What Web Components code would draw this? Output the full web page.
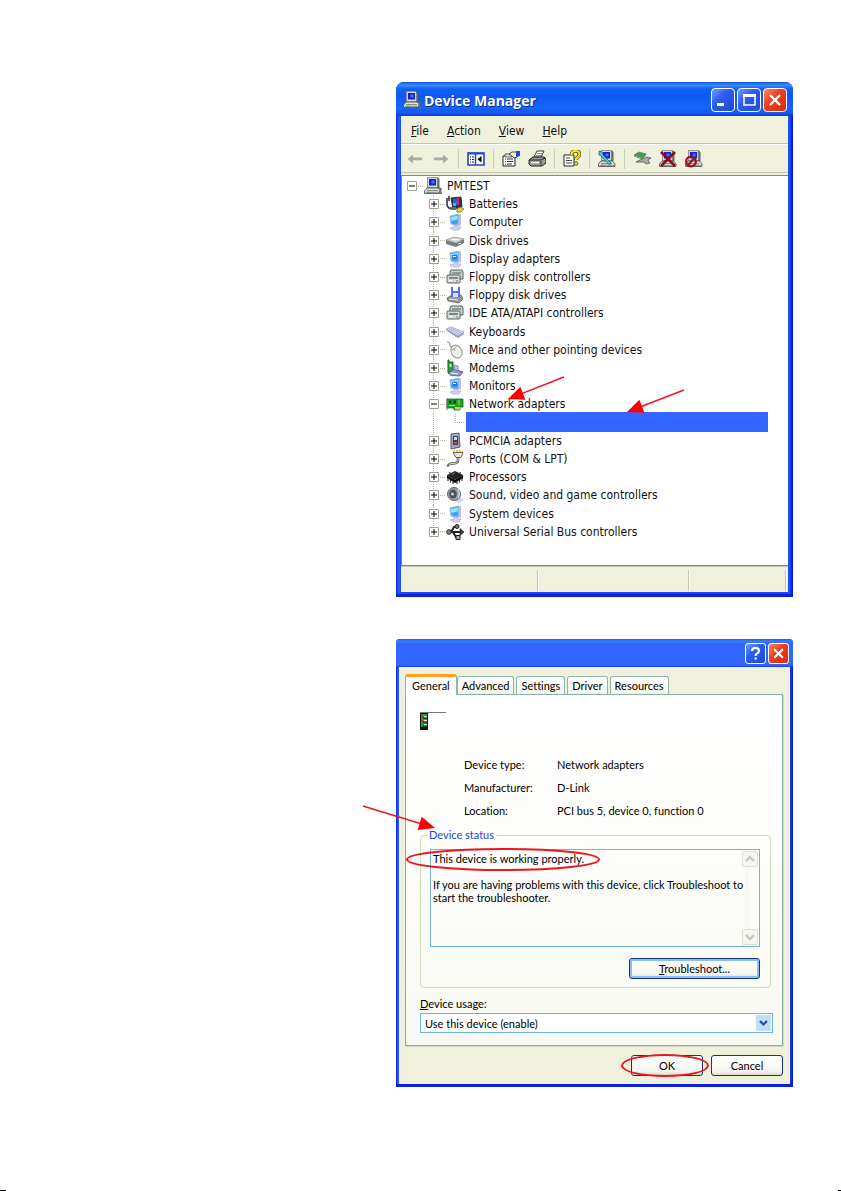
<!DOCTYPE html>
<html lang="en">
<head>
<meta charset="utf-8">
<title>Device Manager</title>
<style>
  * { box-sizing: border-box; }

  body {
    margin: 0;
    background: #fff;
    color: #000;
    font: 12px/16px "DejaVu Sans Condensed", "DejaVu Sans", sans-serif;
    --face: #eff1dc;
  }

  main {
    min-height: 100vh;
    display: grid;
    grid-template-columns: 396px minmax(0, 1fr);
    grid-template-rows: auto auto 1fr;
    row-gap: 42px;
    padding: 82px 48px 0 0;
    position: relative;
  }

  figure { margin: 0; grid-column: 2; position: relative; }

  .crop {
    position: absolute;
    bottom: 0;
    height: 1px;
    background: #000;
  }
  .crop.left { left: 0; width: 6px; }
  .crop.right { right: 0; width: 3px; }
</style>
</head>
<body>
<main>
  <figure>
    <xp-window heading="Device Manager" icon="pc" controls="minimize maximize close">
      <xp-menu></xp-menu>
      <xp-toolbar></xp-toolbar>
      <device-tree>
        <tree-item kind="root" icon="pc" open>PMTEST</tree-item>
        <tree-item icon="battery">Batteries</tree-item>
        <tree-item icon="computer">Computer</tree-item>
        <tree-item icon="disk">Disk drives</tree-item>
        <tree-item icon="display">Display adapters</tree-item>
        <tree-item icon="controller">Floppy disk controllers</tree-item>
        <tree-item icon="floppy">Floppy disk drives</tree-item>
        <tree-item icon="controller">IDE ATA/ATAPI controllers</tree-item>
        <tree-item icon="keyboard">Keyboards</tree-item>
        <tree-item icon="mouse">Mice and other pointing devices</tree-item>
        <tree-item icon="modem">Modems</tree-item>
        <tree-item icon="display">Monitors</tree-item>
        <tree-item icon="network" open>Network adapters</tree-item>
        <tree-item kind="selected"></tree-item>
        <tree-item icon="pcmcia">PCMCIA adapters</tree-item>
        <tree-item icon="port">Ports (COM &amp; LPT)</tree-item>
        <tree-item icon="cpu">Processors</tree-item>
        <tree-item icon="sound">Sound, video and game controllers</tree-item>
        <tree-item icon="computer">System devices</tree-item>
        <tree-item icon="usb" kind="last">Universal Serial Bus controllers</tree-item>
      </device-tree>
      <status-bar></status-bar>
    </xp-window>
    <call-out shape="arrow" from="168,295" to="112,317"></call-out>
    <call-out shape="arrow" from="288,308" to="231,330"></call-out>
  </figure>

  <figure>
    <xp-window compact controls="help close">
      <adapter-properties></adapter-properties>
    </xp-window>
    <call-out shape="arrow" from="-33,167" to="39,189"></call-out>
    <call-out shape="ellipse" from="11,210" to="203,231"></call-out>
  </figure>

  <span class="crop left"></span>
  <span class="crop right"></span>
</main>

<script>
const PC = `
  <path d="M3.500.5H13L15 2v9H3.500z" fill="#7f8582" stroke="#444" stroke-width=".8"/>
  <path d="M3.500.5H13v10H3.500z" fill="#d5d8d0"/>
  <path d="M5 2h7v6.500H5z" fill="#1420d8"/><path d="M7.500 3.500h3v3h-3z" fill="#3a76ff"/>
  <path d="M.5 14L3 11h11.500l2.500 3v2.500H.5z" fill="#e1e1d8" stroke="#555" stroke-width=".9"/>
  <path d="M3 13.500h11M2 15.300h14" stroke="#8a8c85"/><path d="M3 15.300h3" stroke="#2fae4b"/>`;

const LCD = `
  <path d="M12 2l3-1v11l-3 1z" fill="#b8bfe8"/>
  <path d="M4 3l9-2-1 11-7-1z" fill="#39a5f0" stroke="#9fb3e6"/>
  <path d="M5 4l7-1.500-.4 4L5.300 8z" fill="#8ee6ff"/>
  <path d="M8 12h3l.5 2H15l-2 3H7l-3-2 4-1z" fill="#ccd2f2" stroke="#98a0cf" stroke-width=".6"/>`;

const ICONS = {
  pc: PC + `<path d="M14 11q4 0 2.500 2t0 3l1 1" fill="none" stroke="#667" stroke-width="1.500"/>`,
  battery: `
    <path d="M1 3v7q1 4 6 4M3 1v5" fill="none" stroke="#334" stroke-width="1.600"/>
    <path d="M5 3l10-1 1 10-9 2z" fill="#26305e" stroke="#333"/>
    <path d="M7 4h4v6H7z" fill="#3558e8"/><path d="M11 3h2v7h-2z" fill="#e02d35"/><path d="M7 8h3v3H7z" fill="#2bc6cf"/>
    <path d="M4 12h6v3H5z" fill="#667"/><path d="M11 14l3-2 4 2-3 3h-4z" fill="#e5d63b" stroke="#80751b" stroke-width=".8"/>`,
  computer: LCD,
  display: LCD + `<path d="M6 5l5-.6v4L6.500 9z" fill="#2275de"/><path d="M7 6.500h3" stroke="#fff"/>`,
  disk: `
    <path d="M0 8l8-3 10 2v4l-8 4-10-3z" fill="#777c7d"/>
    <path d="M0 8l8-3 10 2-8 4z" fill="#d8dbdb" stroke="#979c9c" stroke-width=".7"/>
    <ellipse cx="9" cy="7.600" rx="4" ry="1.400" fill="#fff" stroke="#aaa" stroke-width=".5"/>
    <path d="M12 12l3-1" stroke="#fff"/>`,
  controller: `
    <path d="M5 2h11l1 2v7H4V4z" fill="#c9cfcb" stroke="#586260"/><path d="M6 5h9" stroke="#586260"/>
    <rect x="1" y="7" width="13" height="8" rx="1" fill="#d8dcd8" stroke="#586260"/>
    <path d="M3 10h9" stroke="#333"/><path d="M3 12.500h3" stroke="#fff"/><path d="M10 13h2" stroke="#2a9d42"/>`,
  floppy: `
    <path d="M1 12l5-3h9l2 4-4 4-11-2z" fill="#92969e" stroke="#555" stroke-width=".7"/>
    <path d="M5 1h9v10H5z" fill="#5a6fe0"/><path d="M7 1h5v4H7z" fill="#fff"/><path d="M7 7h5v4H7z" fill="#dfe4ff"/>
    <path d="M3 13l9 1" stroke="#eee"/>`,
  keyboard: `
    <path d="M0 6l5-2 13 5v2l-6 4L1 8z" fill="#8f98bb"/>
    <path d="M0 6l5-2 13 5-6 4z" fill="#d4daf2" stroke="#9aa3c8" stroke-width=".7"/>
    <path d="M3 6l10 5M5 5.400l10 4.300" stroke="#8790bd" stroke-dasharray="1 1"/>`,
  mouse: `
    <path d="M1 1q3 0 3 3t3 2" fill="none" stroke="#9a9a92" stroke-width="1.200"/>
    <ellipse cx="10.500" cy="10.500" rx="5.200" ry="6.800" transform="rotate(-28 10.500 10.500)" fill="#f1f0e9" stroke="#96968e"/>
    <path d="M4.500 9q4 1 6-4M7.500 7l1 3" fill="none" stroke="#aaa9a0" stroke-width=".9"/>`,
  modem: `
    <path d="M2 1h1v2h4v11H2z" fill="#2e9d35" stroke="#1b5c22"/><path d="M3.500 5h2v3h-2z" fill="#c1f0b8"/>
    <path d="M2 14l6-4 9 3-3 4-9-.5z" fill="#8c95c9" stroke="#444a75" stroke-width=".7"/>
    <path d="M8 10V6l4 1v4" fill="#bac3ef" stroke="#666fa8" stroke-width=".7"/><path d="M5 14l7 1" stroke="#fff"/>`,
  network: `
    <path d="M1 4h16v8h-3v3H8v-2H1z" fill="#19a12b" stroke="#0c6a20" stroke-width=".8"/>
    <path d="M3 5.500h2.500v3H3zM7.500 5.500H10v3H7.500z" fill="#063b10"/><path d="M13 5v5M3 10.500h6" stroke="#c7dc3c"/>
    <path d="M9 12h5v2.500H9z" fill="#e4c93a"/><path d="M1 3v12" stroke="#777"/>`,
  pcmcia: `
    <path d="M5 2l8-1 1 14-9 2z" fill="#a3a9bd" stroke="#555b70"/>
    <path d="M7 4h5v9H7z" fill="#39425f"/><path d="M8 5h3v3H8z" fill="#ccd4ef"/><path d="M8 10h3v2H8z" fill="#d2463f"/>`,
  port: `
    <path d="M7 1h10" stroke="#e2d536" stroke-width="2" stroke-dasharray="2 1"/>
    <path d="M7 2.500h10l-2 5h-5z" fill="#e9e8d8" stroke="#66665d"/>
    <path d="M12 7.500v3q0 3-5 3t-5 3" fill="none" stroke="#555" stroke-width="2.600"/>
    <path d="M12 8v2.500q0 3-5 3t-4 2" fill="none" stroke="#ddd"/>`,
  cpu: `
    <path d="M1 7l8-4 8 4-8 5z" fill="#222"/><path d="M1 7v3l8 5 8-5V7l-8 5z" fill="#000"/>
    <path d="M2 10v3M4.500 12v2.500M7 13.500V16M11 13.500V16M13.500 12v2.500M16 10v3M3 4.500l2 1M15 4.500l-2 1" stroke="#333" stroke-width="1.200"/>
    <path d="M6 6.500l3-1.500" stroke="#888"/>`,
  sound: `
    <path d="M12 9l6 5-5 3-5-3z" fill="#cdd4fa"/>
    <circle cx="8" cy="8" r="6.500" fill="#9da3a8" stroke="#666"/>
    <ellipse cx="7" cy="8" rx="3.800" ry="4.500" fill="#4c5258"/><circle cx="6.500" cy="8" r="1.600" fill="#c9cfd3"/>
    <path d="M12 3q3 4 0 9" fill="none" stroke="#e9ecee"/>`,
  usb: `
    <path d="M1 9h14M5 9l3-5h3M7 9l3 5h2" fill="none" stroke="#222" stroke-width="2"/>
    <path d="M14 5.500L18 9l-4 3.500z" fill="#444" stroke="#111" stroke-width=".6"/>
    <circle cx="3" cy="9" r="2.300" fill="#888" stroke="#222"/><circle cx="11" cy="3.500" r="2" fill="#777" stroke="#222"/>
    <path d="M10 12.500h4v4h-4z" fill="#aaa" stroke="#222"/>`,

  back: `<path d="M1.500 9L7 4.500V7.500h9v3H7v3z" fill="#a9aca0"/><path d="M7 11h9" stroke="#fff" stroke-width=".6"/>`,
  forward: `<path d="M16.500 9L11 4.500V7.500H2v3h9v3z" fill="#a9aca0"/><path d="M2 11h9" stroke="#fff" stroke-width=".6"/>`,
  pane: `
    <path d="M1 3h16v12H1z" fill="#fff" stroke="#2a42bf" stroke-width="1.600"/><path d="M1 3.500h16" stroke="#2448e0" stroke-width="2"/>
    <path d="M8.500 4v11" stroke="#2a42bf" stroke-width="1.500"/>
    <path d="M3 7h1m1 0h2M3 9.500h1m1 0h2M3 12h1m1 0h2" stroke="#222"/><path d="M14.500 6v6.500L10.500 9.300z" fill="#000"/>`,
  properties: `
    <path d="M1 6h12v10H1z" fill="#fff" stroke="#222"/><path d="M3 4h7v3H3z" fill="#ddd" stroke="#444" stroke-width=".8"/>
    <path d="M3 9h1m1 0h6M3 11.500h1m1 0h6M3 14h1m1 0h5" stroke="#333"/>
    <path d="M7 4l3-2h5v5l-3 1-2-2z" fill="#f6eed7" stroke="#222" stroke-width=".8"/><path d="M14 1h4v5l-4 1z" fill="#2349c4"/>`,
  printer: `
    <path d="M6 7l3-6h7l-3 6z" fill="#fff" stroke="#333"/><path d="M9 3.500h5M8 5.500h5" stroke="#777" stroke-width=".8"/>
    <path d="M1 10l4-3h11l2 2v4l-4 3H3l-2-2z" fill="#999d96" stroke="#222"/>
    <path d="M1 10h12l4-2" fill="none" stroke="#222"/><path d="M3 12.500h8" stroke="#fff" stroke-width="1.400"/><path d="M13 11v5" stroke="#333"/>`,
  help: `
    <path d="M1 5h10v11H1z" fill="#fff" stroke="#222"/><path d="M3 8h4M3 10.500h6M3 13h6" stroke="#444"/>
    <path d="M8.500 5q0-4 4-4t4 3.500q0 2-3.500 4V10" fill="none" stroke="#4a4405" stroke-width="3.600"/>
    <path d="M8.500 5q0-4 4-4t4 3.500q0 2-3.500 4V10" fill="none" stroke="#f2e326" stroke-width="2.200"/>
    <circle cx="13" cy="13.500" r="1.800" fill="#f2e326" stroke="#4a4405" stroke-width=".8"/>`,
  scan: PC + `<path d="M1 1l3 1 1 3 8 8-1.500 2L3 6 1 5z" fill="#4cc9d9" stroke="#176775" stroke-width=".8"/>`,
  update: `
    <path d="M1 5l5-3 7 2-4 4z" fill="#41a43c" stroke="#666" stroke-width=".7"/>
    <path d="M1 6l8 3 4-4" fill="none" stroke="#888"/>
    <path d="M7 10l7-3 4 1-3 2 2 3-4 1-2-2H3l4-2z" fill="#a9aca9" stroke="#555" stroke-width=".8"/>`,
  uninstall: PC + `<path d="M2 2l14 14M16 2L2 16" stroke="#8d0e12" stroke-width="2.600"/>`,
  disable: PC + `<circle cx="6" cy="11.500" r="4.800" fill="none" stroke="#9b1015" stroke-width="2.200"/><path d="M3 15l6.500-7" stroke="#9b1015" stroke-width="2"/>`
};

const icon = (name, size = 18) =>
  `<svg width="${size}" height="${size}" viewBox="0 0 18 18" aria-hidden="true">${ICONS[name] || ""}</svg>`;

const CONTROLS = {
  minimize: `<path d="M5 14h7v3H5z" fill="#fff"/>`,
  maximize: `<path d="M6 6h11v10H6z" fill="none" stroke="#fff" stroke-width="1.500"/><path d="M5 6.500h13" stroke="#fff" stroke-width="3"/>`,
  close: `<path d="M6 6l10 10M16 6L6 16" stroke="#fff" stroke-width="2.400"/>`,
  help: `<path d="M7 8q0-3.500 4-3.500T15 8q0 1.800-2 2.800t-2 3" fill="none" stroke="#fff" stroke-width="2.400"/><path d="M10 15.500h2.400V18H10z" fill="#fff"/>`
};

class BaseElement extends HTMLElement {
  constructor() {
    super();
    this.attachShadow({ mode: "open" });
  }

  connectedCallback() {
    this.shadowRoot.innerHTML = this.render();
  }
}

class XpWindow extends BaseElement {
  render() {
    const heading = this.getAttribute("heading");
    const controls = this.getAttribute("controls").split(" ");
    return `
      <style>
        * { box-sizing: border-box; }
        :host {
          display: block;
          padding: 0 5px 5px;
          border-radius: 8px 8px 0 0;
          background: linear-gradient(90deg, #0d28e0, #2f62ff 3px, #1747f0 5px, #1747f0 calc(100% - 5px), #2454ff calc(100% - 4px), #0010d0);
          box-shadow: inset 0 -3px #0a1ee6;
        }
        header {
          height: 34px;
          margin: 0 -5px;
          padding: 1px 6px 0 7px;
          display: flex;
          align-items: center;
          gap: 2px;
          border-radius: 8px 8px 0 0;
          background: linear-gradient(#0a4fd8, #3a8dff 3px, #1160f0 7px, #1058f0 14px, #1565ff 26px, #1458f0 31px, #0a3cc8);
        }
        h1 {
          flex: 1;
          margin: 2px 0 0 1px;
          color: #fff;
          font: bold 14px/20px "Open Sans", sans-serif;
          text-shadow: 1px 1px #0a2a90;
        }
        button {
          width: 24px;
          height: 24px;
          padding: 0;
          border: 1px solid #fff;
          border-radius: 4px;
          background: linear-gradient(135deg, #6f9bff, #2b5df0 40%, #1d49d6);
        }
        button.close { background: linear-gradient(135deg, #ff8a6a, #f04023 40%, #d82a0c); }
        button svg { display: block; width: 100%; height: 100%; }
        .body { background: var(--face); }
        :host([compact]) { padding: 0 3px 3px; border-radius: 4px 4px 0 0; }
        :host([compact]) header {
          height: 28px;
          margin: 0 -3px;
          padding: 1px 4px 0 8px;
          border-radius: 4px 4px 0 0;
          background: linear-gradient(#1a5ce0, #2f7fff 2px, #3366ff 5px, #3366ff 26px, #1440e0);
        }
        :host([compact]) button { width: 21px; height: 21px; border-radius: 3px; }
      </style>
      <header>
        ${heading ? icon(this.getAttribute("icon")) : ""}
        <h1>${heading || ""}</h1>
        ${controls.map(name => `
          <button type="button" class="${name}" aria-label="${name}">
            <svg viewBox="0 0 22 22">${CONTROLS[name]}</svg>
          </button>`).join("")}
      </header>
      <div class="body"><slot></slot></div>
    `;
  }
}

class XpMenu extends BaseElement {
  render() {
    return `
      <style>
        :host {
          display: flex;
          gap: 18px;
          height: 28px;
          box-sizing: border-box;
          padding: 2px 10px 0;
          border-bottom: 1px solid #c3c6b4;
        }
        button { padding: 0; border: 0; background: none; font: inherit; color: #111; }
      </style>
      ${["File", "Action", "View", "Help"].map(item =>
        `<button type="button"><u>${item[0]}</u>${item.slice(1)}</button>`).join("")}
    `;
  }
}

class XpToolbar extends BaseElement {
  render() {
    const tools = ["back", "forward", "", "pane", "", "properties", "printer", "", "help",
      "", "scan", "", "update", "uninstall", "disable"];
    return `
      <style>
        :host {
          display: flex;
          align-items: center;
          gap: 8px;
          height: 29px;
          box-sizing: border-box;
          padding: 0 5px;
          border-top: 1px solid #fff;
          border-bottom: 1px solid #c3c6b4;
        }
        button { padding: 0; border: 0; background: none; }
        svg { display: block; }
        i { width: 1px; height: 20px; background: #cbcdbb; }
      </style>
      ${tools.map(name => name
        ? `<button type="button" aria-label="${name}">${icon(name)}</button>`
        : `<i></i>`).join("")}
    `;
  }
}

class DeviceTree extends BaseElement {
  render() {
    return `
      <style>
        :host {
          display: block;
          margin-top: 2px;
          padding: 1px 20px 24px 0;
          background: #fff;
          border: 1px solid #858b7c;
          border-width: 1px 0 1px 1px;
        }
        .list { display: grid; grid-auto-rows: 1fr; min-height: 364px; }
      </style>
      <div class="list" role="tree"><slot></slot></div>
    `;
  }
}

class TreeItem extends BaseElement {
  render() {
    const kind = this.getAttribute("kind") || "";
    if (kind === "selected") {
      return this.styles() + `
        <span class="guide"></span>
        <span class="elbow"></span>
        <span class="bar"></span>
      `;
    }
    const open = this.hasAttribute("open");
    return this.styles() + `
      <span class="guide ${kind}">
        <button type="button" aria-label="${open ? "Collapse" : "Expand"}">
          <svg width="10" height="10" viewBox="0 0 10 10">
            <path d="M.5.5h9v9h-9z" fill="#fff" stroke="#a0a391"/>
            <path d="M2 5h6${open ? "" : "M5 2v6"}" stroke="#000"/>
          </svg>
        </button>
      </span>
      ${icon(this.getAttribute("icon"))}
      <span class="text"><slot></slot></span>
    `;
  }

  styles() {
    return `
      <style>
        :host {
          display: flex;
          align-items: center;
          min-height: 18px;
          padding-left: 22px;
          color: #111;
          white-space: nowrap;
        }
        :host([kind="root"]) { padding-left: 0; }
        .guide {
          align-self: stretch;
          width: 22px;
          display: flex;
          align-items: center;
          padding-left: 5px;
          margin-right: -5px;
          background:
            repeating-linear-gradient(#b5b7a6 0 1px, transparent 1px 2px) 9px 0 / 1px 100% no-repeat,
            repeating-linear-gradient(90deg, #b5b7a6 0 1px, transparent 1px 2px) 14px 50% / 8px 1px no-repeat;
        }
        .guide.root { background-size: 0 0, 8px 1px; }
        .guide.last { background-size: 1px 50%, 8px 1px; }
        :host([kind="selected"]) .guide { background-size: 1px 100%, 0 0; }
        button { display: block; padding: 0; border: 0; background: none; }
        svg { display: block; flex: none; }
        .text { margin-left: 5px; }
        .elbow {
          align-self: stretch;
          width: 10px;
          margin: 0 1px 0 9px;
          background:
            repeating-linear-gradient(#b5b7a6 0 1px, transparent 1px 2px) 0 0 / 1px 50% no-repeat,
            repeating-linear-gradient(90deg, #b5b7a6 0 1px, transparent 1px 2px) 0 50% / 10px 1px no-repeat;
        }
        .bar { flex: 1; height: 20px; margin: -2px 0 0; background: #3366ff; }
        :host([kind="selected"]) { height: 18px; }
      </style>
    `;
  }
}

class StatusBar extends BaseElement {
  render() {
    return `
      <style>
        :host {
          display: flex;
          height: 26px;
          box-sizing: border-box;
          padding: 3px 2px 1px 0;
          border-top: 1px solid #c3c6b4;
        }
        span { border-right: 1px solid #c3c6b4; box-shadow: 1px 0 #fff; }
        span:nth-of-type(1) { flex: 137; }
        span:nth-of-type(2) { flex: 151; }
        span:nth-of-type(3) { flex: 97; }
      </style>
      <span></span><span></span><span></span>
    `;
  }
}

class XpButton extends BaseElement {
  render() {
    return `
      <style>
        :host { display: block; position: relative; width: 72px; }
        :host([wide]) { width: 131px; }
        button {
          display: block;
          width: 100%;
          height: 21px;
          padding: 0;
          border: 1px solid #12357c;
          border-radius: 3px;
          background: linear-gradient(#fff, #f6f6f0 80%, #dcdccb);
          color: #000;
          font: inherit;
        }
        :host([wide]) button { box-shadow: inset 0 0 0 2px #8fbdf5; }
        /* hand-drawn ring around the button */
        :host([circled])::after {
          content: "";
          position: absolute;
          inset: -1px -6px -1px -10px;
          border: 2px solid #f0141e;
          border-radius: 50%;
          pointer-events: none;
        }
      </style>
      <button type="button"><slot></slot></button>
    `;
  }
}

class AdapterProperties extends BaseElement {
  render() {
    const message = "This device is working properly.\n\nIf you are having problems with this device, click Troubleshoot to\nstart the troubleshooter.";
    const chevron = d => `<svg width="10" height="8" viewBox="0 0 10 8"><path d="${d}" fill="none" stroke="#c3c8ba" stroke-width="2.400"/></svg>`;
    return `
      <style>
        * { box-sizing: border-box; }
        :host {
          display: block;
          padding: 7px 7px 8px 6px;
          font: 11px/13px Lato, "Liberation Sans", sans-serif;
          font-variant-ligatures: none;
        }
        nav { display: flex; align-items: flex-end; gap: 2px; }
        nav button {
          height: 18px;
          padding: 0 4px;
          border: 1px solid #8fb5b0;
          border-bottom: 0;
          border-radius: 3px 3px 0 0;
          background: linear-gradient(#fff, #f3f4ea);
          color: #000;
          font: inherit;
        }
        nav button[aria-selected="true"] {
          height: 21px;
          margin: 0 -2px -1px 0;
          padding: 0 6px 2px;
          border-top: 3px solid #ffa01e;
          background: #fff;
          position: relative;
        }
        .panel {
          padding: 17px 9px 12px 14px;
          border: 1px solid #8aaea6;
          background: linear-gradient(#fff, #fdfdfb 40%, #f8f9f2);
          box-shadow: 1px 1px #d5d8c4;
        }
        .card { display: block; border-top: 1px solid #777; width: 26px; height: 18px; }
        dl {
          margin: 23px 0 0 44px;
          display: grid;
          grid-template-columns: 93px 1fr;
          line-height: 23px;
        }
        dd { margin: 0; }
        fieldset {
          margin: 6px 2px 0 0;
          min-width: 0;
          padding: 7px 10px 8px 9px;
          border: 1px solid #d0dcb9;
          border-radius: 4px;
        }
        legend { margin-left: -3px; padding: 0 2px; color: #1d46e0; line-height: 14px; }
        .box {
          display: flex;
          height: 98px;
          margin-bottom: 11px;
          border: 1px solid #6fb5d8;
        }
        /* the text may run a little under the scroll track */
        textarea {
          flex: 1;
          min-width: 0;
          margin-right: -4px;
          padding: 2px 0 0 2px;
          border: 0;
          resize: none;
          overflow: hidden;
          white-space: pre;
          background: none;
          color: #000;
          font: inherit;
        }
        .scroll {
          display: flex;
          flex-direction: column;
          justify-content: space-between;
          width: 18px;
          padding: 1px;
          background: linear-gradient(90deg, transparent 4px, #f6f6f1 4px, #fff);
        }
        .scroll button {
          height: 16px;
          padding: 0;
          display: grid;
          place-items: center;
          border: 1px solid #dde0d2;
          border-radius: 2px;
          background: #f5f6ef;
        }
        fieldset xp-button { margin-left: auto; }
        label { display: block; margin: 9px 0 2px; line-height: 14px; }
        .select { position: relative; }
        select {
          display: block;
          width: 100%;
          height: 20px;
          padding: 0 20px 0 4px;
          border: 1px solid #6fb5d8;
          border-radius: 0;
          appearance: none;
          background: #fff;
          color: #000;
          font: inherit;
        }
        .select svg { position: absolute; top: 2px; right: 2px; pointer-events: none; }
        footer { display: flex; justify-content: flex-end; gap: 8px; margin-top: 9px; }
      </style>
      <nav role="tablist">
        ${["General", "Advanced", "Settings", "Driver", "Resources"].map((tab, i) =>
          `<button type="button" role="tab" aria-selected="${i === 0}">${tab}</button>`).join("")}
      </nav>
      <div class="panel">
        <span class="card">
          <svg width="9" height="17" viewBox="0 0 9 17">
            <path d="M0 0h8v17H0z" fill="#111"/><path d="M1 1h6v13H1z" fill="#19a12b"/>
            <path d="M1 2h2v2H1zM1 7h2v2H1z" fill="#d9302c"/>
            <path d="M4 3h3v2H4zM4 7h3v2H4zM4 11h3v2H4z" fill="#ddd"/><path d="M3 5h4M3 9h4M3 13h4" stroke="#000"/>
          </svg>
        </span>
        <dl>
          <dt>Device type:</dt><dd>Network adapters</dd>
          <dt>Manufacturer:</dt><dd>D-Link</dd>
          <dt>Location:</dt><dd>PCI bus 5, device 0, function 0</dd>
        </dl>
        <fieldset>
          <legend>Device status</legend>
          <div class="box">
            <textarea readonly aria-label="Device status">${message}</textarea>
            <div class="scroll">
              <button type="button" aria-label="Scroll up">${chevron("M1 6l4-4 4 4")}</button>
              <button type="button" aria-label="Scroll down">${chevron("M1 2l4 4 4-4")}</button>
            </div>
          </div>
          <xp-button wide><u>T</u>roubleshoot...</xp-button>
        </fieldset>
        <label for="usage"><u>D</u>evice usage:</label>
        <div class="select">
          <select id="usage"><option>Use this device (enable)</option></select>
          <svg width="15" height="16" viewBox="0 0 15 16">
            <rect width="15" height="16" rx="1" fill="#c3dcfb"/>
            <path d="M4 6l3.500 3.500L11 6" fill="none" stroke="#2a4d96" stroke-width="2.200"/>
          </svg>
        </div>
      </div>
      <footer>
        <xp-button circled>OK</xp-button>
        <xp-button>Cancel</xp-button>
      </footer>
    `;
  }
}

// Red arrow or ellipse over a figure, in the figure's own coordinates
class CallOut extends BaseElement {
  render() {
    const [x1, y1] = this.getAttribute("from").split(",").map(Number);
    const [x2, y2] = this.getAttribute("to").split(",").map(Number);
    return `
      <style>
        :host { position: absolute; top: 0; left: 0; pointer-events: none; }
        svg { display: block; overflow: visible; }
      </style>
      <svg width="1" height="1" fill="none" stroke="#f0141e" stroke-width="2">
        ${this.getAttribute("shape") === "arrow" ? this.arrow(x1, y1, x2, y2) : `
          <ellipse cx="${(x1 + x2) / 2}" cy="${(y1 + y2) / 2}" rx="${(x2 - x1) / 2}" ry="${(y2 - y1) / 2}"/>`}
      </svg>
    `;
  }

  arrow(x1, y1, x2, y2) {
    const angle = Math.atan2(y2 - y1, x2 - x1) * 180 / Math.PI;
    const length = Math.hypot(x2 - x1, y2 - y1);
    return `
      <g transform="translate(${x1} ${y1}) rotate(${angle})">
        <path d="M0 0H${length - 14}" stroke-width="1.500"/>
        <path d="M${length} 0l-16 -7v14z" fill="#ff0000" stroke="none"/>
      </g>
    `;
  }
}

customElements.define("xp-window", XpWindow);
customElements.define("xp-menu", XpMenu);
customElements.define("xp-toolbar", XpToolbar);
customElements.define("device-tree", DeviceTree);
customElements.define("tree-item", TreeItem);
customElements.define("status-bar", StatusBar);
customElements.define("xp-button", XpButton);
customElements.define("adapter-properties", AdapterProperties);
customElements.define("call-out", CallOut);
</script>
</body>
</html>
